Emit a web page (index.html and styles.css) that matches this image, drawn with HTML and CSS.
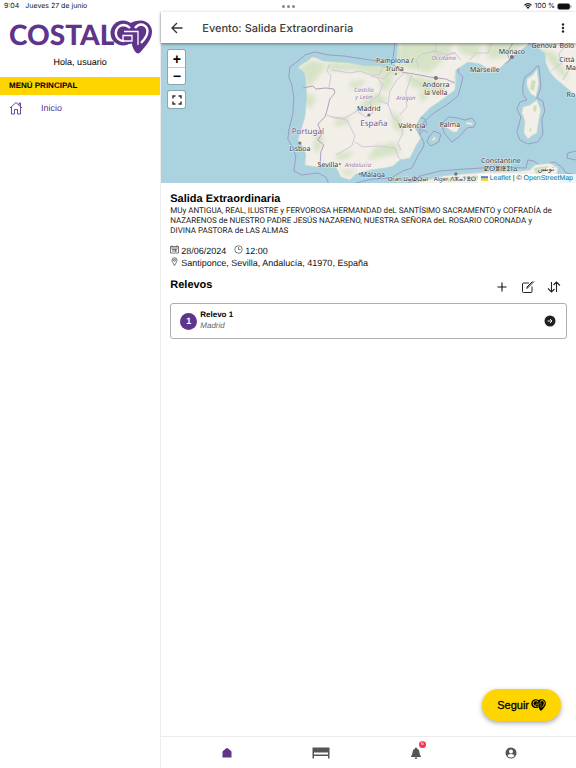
FILE: index.html
```html
<!DOCTYPE html>
<html lang="es">
<head>
<meta charset="utf-8">
<meta name="viewport" content="width=device-width, initial-scale=1">
<title>Evento: Salida Extraordinaria</title>
<link rel="stylesheet" href="styles.css">
</head>
<body>
<svg class="defs" aria-hidden="true">
  <symbol id="heart" viewBox="0 0 42 34">
    <g fill="currentColor" stroke="none">
      <circle cx="13" cy="13" r="12.500"/>
      <path d="M19 4C23 1 27 .500 31 .500c6 0 11 5 11 11 0 8-6 14-11 20-2 2.500-4 2.500-6 0-2-3-3-6-3-8l-6 1z"/>
    </g>
    <path d="M20 8C18 6 16 5 13.500 5a8 8 0 1 0 .500 16M25 8c2-2.500 4-3.500 6-3.500 3.500 0 6.500 3 6.500 6.500 0 5-3.500 9-6.500 12" fill="none" stroke-width="2.400"/>
    <path d="M14 11.500h14v13.500M22 15.500l-9 0v5.500h9z" fill="none" stroke-width="1.300"/>
  </symbol>
</svg>
<div class="app">
  <header class="status">
    <span class="clock">9:04</span>
    <span>Jueves 27 de junio</span>
    <span class="dots"><i></i><i></i><i></i></span>
    <span class="power">
      <svg width="8" height="6" viewBox="0 0 16 12" aria-hidden="true"><path d="M1 4.500Q8-2 15 4.500M3.500 7Q8 3 12.500 7" fill="none" stroke="#111" stroke-width="2.200"/><path d="M5 8.500Q8 6 11 8.500L8 12z" fill="#111"/></svg>
      <span>100 %</span>
      <svg width="15" height="7" viewBox="0 0 30 14" aria-hidden="true"><rect x="1" y="1" width="25" height="12" rx="4" fill="#111" stroke="#888"/><path d="M28 5v4" stroke="#888" stroke-width="2"/></svg>
    </span>
  </header>

  <div class="columns">
    <aside class="side">
      <div class="logo"><span>COSTAL</span><svg class="logo-mark" aria-hidden="true"><use href="#heart"/></svg></div>
      <p class="hello">Hola, usuario</p>
      <h2 class="menu-title">MENÚ PRINCIPAL</h2>
      <nav>
        <a class="menu-link" href="#">
          <svg width="14" height="14" viewBox="0 0 28 28" fill="none" stroke="currentColor" stroke-width="1.800" stroke-linejoin="round" aria-hidden="true"><path d="M2 14L14 3l12 11M20 8V4h3v7M5 12v14h6v-9h6v9h6V12"/></svg>
          <span>Inicio</span>
        </a>
      </nav>
    </aside>

    <main class="main">
      <div class="toolbar">
        <button class="icon-btn" aria-label="Volver"><svg width="14" height="14" viewBox="0 0 28 28" fill="none" stroke="#333" stroke-width="2.600" aria-hidden="true"><path d="M25 14H4M14 4L4 14l10 10"/></svg></button>
        <h1>Evento: Salida Extraordinaria</h1>
        <button class="icon-btn more" aria-label="Opciones"><svg width="4" height="10" viewBox="0 0 4 10" fill="#222" aria-hidden="true"><circle cx="2" cy="1.500" r="1.200"/><circle cx="2" cy="5" r="1.200"/><circle cx="2" cy="8.500" r="1.200"/></svg></button>
      </div>

      <div class="map">
        <svg class="map-art" viewBox="161 43 415 140" preserveAspectRatio="xMidYMid slice" role="img" aria-label="Mapa de España">
          <defs>
            <filter id="soft" x="-20%" y="-20%" width="140%" height="140%"><feGaussianBlur stdDeviation="2.200"/></filter>
            <clipPath id="land">
              <path d="M298 68l4-4 6-3 4-4 5 1 6 3 13 1 14 1 15 3 15 0 7 2 7-2 3-5 1-20 58-3v42l-1 10-12 9-13 9-10 10-5 10 6 10-5 8-6 12-10 2-7 6-8 2-15 2-14 4-6 6-9-3-5-10-11-2-9 2-11-2 1-11-3-7-5-7 2-6 5-17 2-20-1-13-1-10-3-4z"/>
              <path d="M398 36h130v9l-16 12-12 11-8 3-12-7-12-2-12 8-2 12-20 12-34-25z"/>
              <path d="M530 36l5 9 10 8 1 10 4 9 5 6 12 10 14 12V36z"/>
            </clipPath>
          </defs>
          <rect x="0" y="0" width="900" height="400" fill="#aad3df"/>
          <g class="limit">
            <path d="M395 43l-2 17-9 2-20-3-20-3-15-1-14-3-10 3-8 7-7 5-1 10 3 8 2 12-1 17-4 16-1 9 5 9 3 8-2 15 8 4 16-2 8 4 5 12M349 187l7-4 16-4 19-1 12-7 9-3 6-12 6-10 0-4-5-9 4-10 11-10 14-9 10-8 3-10 2-9-5-5 2-8 9-5 12 1 10 5 9 1 8-4 13-12 13-10 6-2 12 6 4 10-2 12 1 7 12 2 11 4 8 6"/>
            <path d="M537 66l-5 6-7 5-2 8 0 9 4 6-7 2-3 7 4 8-4 15 3 8 8 4 10-2 5-8-1-15 3-8-2-10-6-3 4-10-1-13-1-9zM441 124l8-7 9 1 7 2 7-2 4 5-2 4-7 1-8 9-7 5-7-8zM429 137l5-6 7 3-2 8-8 4-4-4zM420 134l4-4 4 3M400 188l20-12 20-5 25-2 33-2 28 1 2-8 6 1 5 4 16-3 8 6 3 5 11 2M576 151l-8 2-1 5 9 2M420 117l5 2 2 6-5 4-5 0"/>
          </g>
          <g fill="#f2efe9" stroke="#c9d7d0" stroke-width="0.700">
            <path d="M298 68l4-4 6-3 4-4 5 1 6 3 13 1 14 1 15 3 15 0 7 2 7-2 3-5 1-20 58-3v42l-1 10-12 9-13 9-10 10-5 10 6 10-5 8-6 12-10 2-7 6-8 2-15 2-14 4-6 6-9-3-5-10-11-2-9 2-11-2 1-11-3-7-5-7 2-6 5-17 2-20-1-13-1-10-3-4z"/>
            <path d="M398 36h130v9l-16 12-12 11-8 3-12-7-12-2-12 8-2 12-20 12-34-25z"/>
            <path d="M530 36l5 9 10 8 1 10 4 9 5 6 12 10 14 12V36z"/>
            <path d="M537 69l2 14-3 14-5-3-4-8 0-7 6-4zM523 107l7-2 7-5 4 10-2 10-2 13-4 2-5 4-4-6 1-12-3-8zM446 127l7-5 3 2 4 2-3 6-4 0zM467 122l6 1-1 2-6-1zM432 139l3-2 1 2-3 2zM380 188l40-6 23-6 20-2 24-2 26 0 17-2 5-5 15-2 8 5-1 9 8 12z"/>
          </g>
          <g clip-path="url(#land)"><path fill="#b5d59b" opacity="0.450" filter="url(#soft)" d="M300 66l14-6 13 5-9 12-10 11zM328 62l65 3 10 8-18 5-30-8-26 1zM400 38l55 0-6 18-20 17-32-7zM455 42l28 0-5 15-16-3zM484 40l45 1-22 16-18 2zM405 75l28 5 15 8-11 7-26-9zM308 93l8 4-5 13-6-8zM365 98l14-5 10 7-18 8-15 5zM385 74l9 6-8 12-8-7zM391 111l9 5 4 19-11-7zM335 120l16-3-4 7-12 3zM318 128l6 12-6 13-5-5zM376 146l19-4 6 11-20 4-14 3zM335 154l20-3-9 9-9-1zM536 48l20 5 14 27-10-5-15-19zM340 170l17-1-9 8zM350 82l16-3-5 8-11 1zM418 91l12 4-8 8z"/></g>
          <g fill="#b5d59b" opacity="0.600"><path d="M532 80l4 1-2 10-4-2zM534 105l3 1-1 6-3-2zM529 130l3-3-1 5zM445 179l9-2 3 2-8 3zM465 178l17-3 5 2-17 4zM495 177l25-3 8 3-20 4zM534 168l14-2-3 6-9 2z"/></g>
          <path class="border" d="M303 88l10-2 3 3 10-1 8 1 1 4-5 6-3 12-2 6-7 7 4 10-4 6 6 5-3 7-1 16M394 65l8 7 12 2 16 3 16 2 9 4M510 60l-3-7 6-10"/>
          <path class="region" d="M330 64l-3 7 4 5-2 12M332 70l18 3 10-2 12 4 7 0 4-8M331 117l14 1 12-7 9 6 7-4-3-11 9-7 4-10-6-8M327 115l8 3 12 2 4 8 4 8-3 10-16 9M355 142l8 5 14-1 18 2 4 10 6 4M378 100l10 4 5 13 8 7 2 9-5 10 3 7M388 105l2-14 7-11 8-7M412 75l-6 17 1 15-7 8M371 76l13 3 9-10M419 68l-3-8 6-6 14-3M436 43v8l10 4 10-2M461 60l-7-8-12 6-9-8M470 60l6-7 12 0 4-10M551 71l11-8-3-9 9-11M563 80l7-12 6 0"/>
          <g fill="#777">
            <circle cx="369" cy="115" r="1.600"/><circle cx="300" cy="143" r="1.600"/><circle cx="436" cy="78" r="2"/><circle cx="512" cy="57" r="2"/><circle cx="456" cy="174" r="1.700"/><circle cx="340" cy="164" r="1"/><circle cx="360" cy="174" r="1"/><circle cx="396" cy="74" r="1"/><circle cx="411" cy="130" r="1"/>
          </g>
          <g class="city">
            <text x="395" y="63">Pamplona /</text><text x="395" y="71">Iruña</text>
            <text x="369" y="111">Madrid</text><text x="300" y="151">Lisboa</text><text x="328" y="167">Sevilla</text>
            <text x="373" y="177">Málaga</text><text x="412" y="128">València</text><text x="436" y="87">Andorra</text><text x="436" y="95">la Vella</text>
            <text x="485" y="72">Marseille</text><text x="512" y="54">Monaco</text><text x="544" y="48">Genova</text><text x="567" y="48">Bolo</text>
            <text x="567" y="62">Città</text><text x="571" y="70">Ma</text><text x="571" y="97">Ro</text><text x="450" y="127">Palma</text>
            <text x="501" y="163">Constantine</text><text x="501" y="171">ⵇⵙⴻⵏⵟⵉⵏⴰ</text><text x="546" y="171">تونس</text>
          </g>
          <g class="city coast"><text x="408" y="181">Oran ⵡⴰⵀⵔⴰⵏ</text><text x="455" y="181">Alger ⴷⵣⴰⵢⴻⵔ</text></g>
          <g class="country"><text x="374" y="126">España</text><text x="308" y="134">Portugal</text></g>
          <g class="province"><text x="364" y="92">Castilla</text><text x="364" y="99">y León</text><text x="406" y="100">Aragón</text><text x="358" y="167">Andalucía</text><text x="444" y="60">Occitanie</text></g>
        </svg>
        <div class="map-controls">
          <div class="zoom"><button aria-label="Acercar">+</button><button aria-label="Alejar">−</button></div>
          <button class="full" aria-label="Pantalla completa"><svg width="10" height="10" viewBox="0 0 10 10" fill="none" stroke="#333" stroke-width="1.500" aria-hidden="true"><path d="M1 3.500V1h2.500M6.500 1H9v2.500M9 6.500V9H6.500M3.500 9H1V6.500"/></svg></button>
        </div>
        <div class="credit"><svg width="7" height="5" viewBox="0 0 12 8" aria-hidden="true"><path fill="#4c7be1" d="M0 0h12v4H0z"/><path fill="#ffd500" d="M0 4h12v4H0z"/></svg> <a href="#">Leaflet</a> | © <a href="#">OpenStreetMap</a></div>
      </div>

      <section class="event">
        <h2>Salida Extraordinaria</h2>
        <p class="org">MUy ANTIGUA, REAL, ILUSTRE y FERVOROSA HERMANDAD deL SANTÍSIMO SACRAMENTO y COFRADÍA de NAZARENOS de NUESTRO PADRE JESÚS NAZARENO, NUESTRA SEÑORA deL ROSARIO CORONADA y DIVINA PASTORA de LAS ALMAS</p>
        <div class="facts">
          <div class="fact"><svg width="9" height="9" viewBox="0 0 18 18" fill="none" stroke="#333" stroke-width="1.300" aria-hidden="true"><path d="M1 3h16v13H1zM1 6h16M4 1v3M14 1v3M4 9h10M4 12h10M11 9v4"/></svg><span class="date">28/06/2024</span><svg width="9" height="9" viewBox="0 0 18 18" fill="none" stroke="#333" stroke-width="1.300" aria-hidden="true"><circle cx="9" cy="9" r="7.500"/><path d="M9 4v5h4"/></svg><span>12:00</span></div>
          <div class="fact"><svg width="9" height="9" viewBox="0 0 18 18" fill="none" stroke="#333" stroke-width="1.400" aria-hidden="true"><path d="M9 17C6 12 4 9 4 6.500a5 5 0 0 1 10 0C14 9 12 12 9 17z"/><circle cx="9" cy="6.500" r="2"/></svg><span>Santiponce, Sevilla, Andalucía, 41970, España</span></div>
        </div>
        <div class="relays-head">
          <h2>Relevos</h2>
          <div class="tools">
            <button class="icon-btn" aria-label="Añadir"><svg width="14" height="14" viewBox="0 0 28 28" fill="none" stroke="#111" stroke-width="2.200" aria-hidden="true"><path d="M14 5v18M5 14h18"/></svg></button>
            <button class="icon-btn" aria-label="Editar"><svg width="14" height="14" viewBox="0 0 28 28" fill="none" stroke="#222" stroke-width="2" stroke-linejoin="round" aria-hidden="true"><path d="M16 6H5q-2 0-2 2v15q0 2 2 2h15q2 0 2-2V13M26 3L12 17M12 17v-3L23 3"/></svg></button>
            <button class="icon-btn" aria-label="Ordenar"><svg width="14" height="14" viewBox="0 0 28 28" fill="none" stroke="#222" stroke-width="2.200" aria-hidden="true"><path d="M9 4v20M2 17l7 7 6-6M19 24V4M13 10l6-6 7 7"/></svg></button>
          </div>
        </div>
        <a class="relay" href="#">
          <span class="num">1</span>
          <span class="relay-text"><strong>Relevo 1</strong><em>Madrid</em></span>
          <svg width="12" height="12" viewBox="0 0 24 24" aria-hidden="true"><circle cx="12" cy="12" r="11" fill="#1e2023"/><path d="M7 12h9M12 8l4 4-4 4" fill="none" stroke="#fff" stroke-width="1.800"/></svg>
        </a>
      </section>

      <button class="follow"><span>Seguir</span><svg class="follow-mark" aria-hidden="true"><use href="#heart"/></svg></button>

      <nav class="tabs">
        <a class="active" href="#" aria-label="Inicio"><svg width="10" height="10" viewBox="0 0 20 20" fill="currentColor" aria-hidden="true"><path d="M10 0l2 1 6 5q1 1 1 2v10q0 1-1 1H2q-1 0-1-1V8q0-1 1-2l6-5z"/></svg></a>
        <a href="#" aria-label="Pasos"><svg width="18" height="12" viewBox="0 0 36 24" fill="currentColor" aria-hidden="true"><path d="M1 1h34v22h-3v-5H4v5H1zM4 11v4h28v-4z" fill-rule="evenodd"/></svg></a>
        <a href="#" aria-label="Avisos"><svg width="12" height="12" viewBox="0 0 24 24" fill="currentColor" aria-hidden="true"><path d="M12 1q2 0 2 2 5 2 5 8 0 5 3 7v2H2v-2q3-2 3-7 0-6 5-8 0-2 2-2zM9 21h6q-1 3-3 3t-3-3z"/></svg><span class="badge">6</span></a>
        <a href="#" aria-label="Perfil"><svg width="12" height="12" viewBox="0 0 24 24" aria-hidden="true"><circle cx="12" cy="12" r="11" fill="currentColor"/><circle cx="12" cy="9" r="4" fill="#fff"/><path d="M5 18q1-4 7-4t7 4q-3 3-7 3t-7-3z" fill="#fff"/></svg></a>
      </nav>
    </main>
  </div>
</div>
</body>
</html>
```
FILE: styles.css
```css
* { box-sizing: border-box; }
body { margin: 0; background: #fff; color: #000; font-family: "Liberation Sans", Arial, sans-serif; font-size: 9px; text-rendering: geometricPrecision; }
h1, h2, p { margin: 0; }
a { color: inherit; text-decoration: none; }
button { font: inherit; color: inherit; background: none; border: 0; padding: 0; cursor: pointer; }
svg { display: block; flex: none; }
.defs { position: absolute; width: 0; height: 0; }
.app { min-height: 100vh; display: flex; flex-direction: column; }

.status { position: relative; height: 12px; flex: none; display: flex; align-items: center; gap: 6px; padding: 0 4px; font-family: Inter, sans-serif; font-size: 7px; line-height: 12px; color: #111; }
.dots { position: absolute; left: 50%; top: 5px; margin-left: -6px; display: flex; gap: 2px; }
.dots i { width: 3px; height: 3px; border-radius: 50%; background: #888; }
.power { margin-left: auto; display: flex; align-items: center; gap: 2px; }

.columns { flex: 1; display: flex; }
.side { width: 28%; flex: none; border-right: 1px solid #ededed; }
.logo { height: 43px; padding: 8px 9px 0; display: flex; color: #5f358c; font-family: Lato, sans-serif; font-weight: 900; font-size: 28px; line-height: 28px; }
.logo-mark { width: 42px; height: 34px; margin-left: -4px; stroke: #fff; }
.hello { text-align: center; line-height: 14px; padding-bottom: 8px; }
.menu-title { background: #ffd500; font-size: 8px; line-height: 18px; padding: 0 9px; }
.menu-link { display: flex; align-items: center; gap: 18px; height: 26px; padding: 0 9px; color: #5f358c; }

.main { flex: 1; min-width: 0; display: flex; flex-direction: column; }
.toolbar { position: relative; z-index: 2; height: 31px; flex: none; display: flex; align-items: center; background: #fff; padding: 0 11px 0 9px; box-shadow: 0 1px 3px rgba(0,0,0,.45); }
.toolbar h1 { flex: 1; margin-left: 18px; font-family: Inter, sans-serif; font-weight: 500; font-size: 11px; line-height: 16px; color: #3c3c3c; }
.icon-btn { display: grid; place-items: center; }

.map { position: relative; height: 140px; flex: none; overflow: hidden; background: #aad3df; }
.map-art { width: 100%; height: 100%; }
.limit { fill: none; stroke: #9c9cc4; stroke-width: 1; }
.border { fill: none; stroke: #b39fc0; stroke-width: 1; }
.region { fill: none; stroke: #d3c7d6; stroke-width: 1; }
.map text { text-anchor: middle; paint-order: stroke; stroke: #fff; stroke-opacity: .7; stroke-width: 1px; }
.city { font-family: "Noto Sans", "DejaVu Sans", sans-serif; font-size: 7px; fill: #333; }
.coast { font-size: 6px; }
.country { font-family: "Noto Sans", sans-serif; font-size: 8px; fill: #79528c; }
.province { font-family: "Noto Sans", sans-serif; font-size: 6px; font-style: italic; fill: #9473a0; }
.map-controls { position: absolute; left: 7px; top: 7px; display: grid; gap: 7px; }
.map-controls button { width: 17px; height: 17px; display: grid; place-items: center; background: #fff; font-weight: 700; font-size: 14px; line-height: 16px; }
.zoom, .full { border-radius: 2px; box-shadow: 0 0 0 1px rgba(0,0,0,.2); overflow: hidden; }
.zoom button + button { border-top: 1px solid #ccc; }
.credit { position: absolute; right: 0; bottom: 0; display: flex; align-items: center; gap: 2px; padding: 0 3px; font-size: 7px; line-height: 9px; color: #333; background: rgba(255,255,255,.8); }
.credit a { color: #0078a8; }

.event { padding: 9px 9px 0; flex: 1; }
.event h2 { font-size: 11px; line-height: 14px; }
.org { padding-right: 12px; font-family: Roboto, Arial, sans-serif; font-size: 8px; line-height: 10px; color: #222; }
.facts { padding: 9px 0; line-height: 12px; color: #111; }
.fact { display: flex; align-items: flex-start; gap: 2px; }
.date { margin-right: 6px; }
.relays-head { display: flex; justify-content: space-between; height: 25px; }
.tools { display: flex; align-items: flex-start; gap: 12px; padding: 2px 6px 0 0; }
.relay { display: flex; align-items: center; gap: 3px; height: 36px; padding: 0 10px 0 9px; border: 1px solid #aeaeb2; border-radius: 3px; }
.num { width: 17px; height: 17px; border-radius: 50%; background: #5f358c; color: #fff; font-size: 9px; font-weight: 700; line-height: 17px; text-align: center; }
.relay-text { flex: 1; display: grid; font-size: 8px; line-height: 11px; padding-bottom: 2px; }
.relay-text em { color: #666; }

.follow { align-self: flex-end; display: flex; align-items: center; gap: 2px; height: 32px; margin: 0 15px 15px; padding: 0 15px; border-radius: 16px; background: #ffd500; box-shadow: 0 2px 5px rgba(0,0,0,.35); font-size: 11px; -webkit-text-stroke: .3px #000; }
.follow-mark { width: 15px; height: 12px; stroke: #ffd500; }
.tabs { height: 32px; flex: none; display: flex; padding: 0 18px; border-top: 1px solid #ececec; color: #555; }
.tabs a { position: relative; flex: 1; display: grid; place-items: center; }
.tabs .active { color: #5f358c; }
.badge { position: absolute; left: 50%; top: 4px; margin-left: 3px; width: 7px; height: 7px; border-radius: 50%; background: #f0384f; color: #fff; font-size: 5px; line-height: 7px; text-align: center; }
```
